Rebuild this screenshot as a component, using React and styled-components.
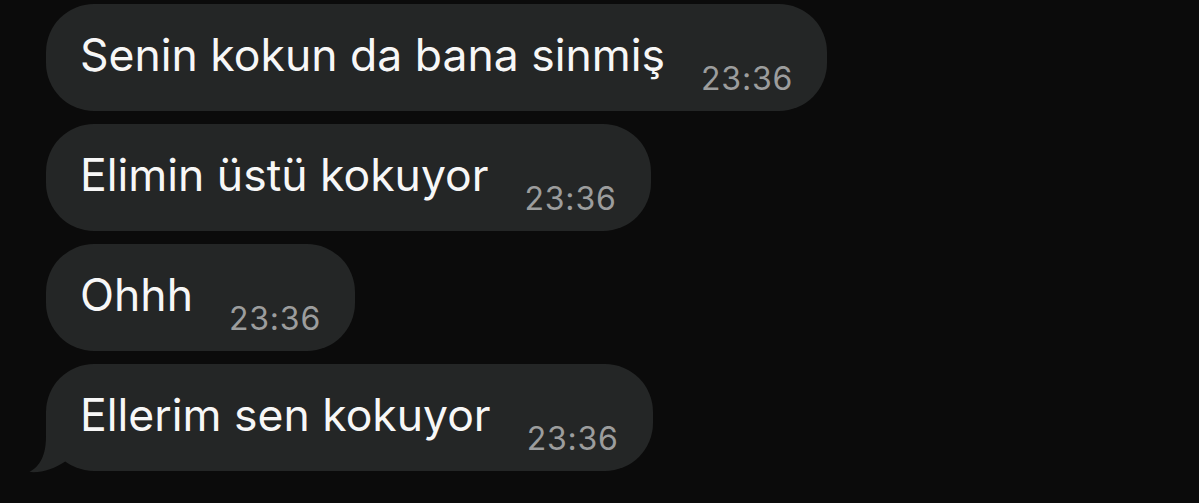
import React from "react";
import styled, { createGlobalStyle } from "styled-components";

const Global = createGlobalStyle`
  html, body {
    margin: 0;
    padding: 0;
    background: #0b0b0b;
  }
`;

const Thread = styled.div`
  display: flex;
  flex-direction: column;
  align-items: flex-start;
  gap: 13px;
  padding: 4px 0 0 46px;
  height: 503px;
  box-sizing: border-box;
  background: #0b0b0b;
  font-family: Inter, "Noto Sans", sans-serif;
`;

const Bubble = styled.div`
  position: relative;
  display: flex;
  align-items: flex-start;
  gap: 36px;
  height: 107px;
  box-sizing: border-box;
  padding: 0 34px;
  border-radius: 48px;
  background: #242626;
`;

const Text = styled.span`
  margin-top: 23px;
  font-size: 44.5px;
  line-height: 56px;
  color: #f7f7f7;
  white-space: nowrap;
`;

const Time = styled.span`
  align-self: flex-end;
  margin-bottom: 12px;
  font-size: 32px;
  line-height: 40px;
  color: #9c9d9d;
  letter-spacing: 0.8px;
`;

const Tail = styled.svg`
  position: absolute;
  left: -17px;
  bottom: -2px;
  width: 40px;
  height: 62px;
`;

const messages = [
  "Senin kokun da bana sinmiş",
  "Elimin üstü kokuyor",
  "Ohhh",
  "Ellerim sen kokuyor",
];

export default function App() {
  return (
    <>
      <Global />
      <Thread>
        {messages.map((m, i) => (
          <Bubble key={i}>
            <Text>{m}</Text>
            <Time>23:36</Time>
            {i === messages.length - 1 && (
              <Tail viewBox="-17 -60 40 62">
                <path
                  d="M0 -60 L0 -35 C0 -15 -6 -5 -16.5 1 C-4 2 8 -2 20 -10 L20 -60 Z"
                  fill="#242626"
                />
              </Tail>
            )}
          </Bubble>
        ))}
      </Thread>
    </>
  );
}
